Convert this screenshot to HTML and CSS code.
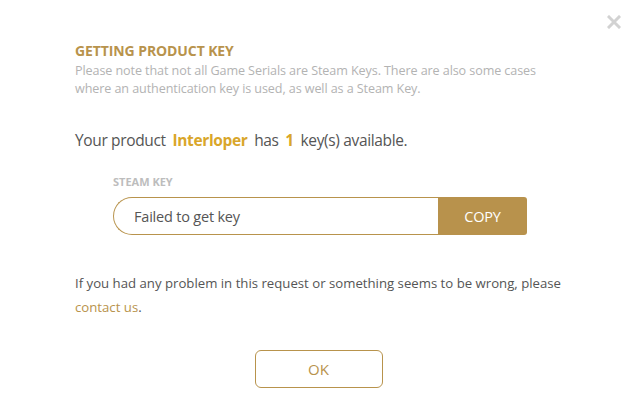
FILE: index.html
```html
<!DOCTYPE html>
<html>
<head>
<meta charset="utf-8">
<link rel="stylesheet" href="styles.css">
</head>
<body>
<div class="modal">
  <button class="close" aria-label="Close">
    <svg width="14" height="14" viewBox="0 0 14 14"><path d="M2 2L12 12M12 2L2 12" stroke="#d2d2d2" stroke-width="3" stroke-linecap="square"/></svg>
  </button>
  <h2 class="title">GETTING PRODUCT KEY</h2>
  <p class="note">Please note that not all Game Serials are Steam Keys. There are also some cases where an authentication key is used, as well as a Steam Key.</p>
  <p class="product">Your product <strong class="hl">Interloper</strong> has <strong class="hl">1</strong> key(s) available.</p>
  <div class="keybox">
    <div class="label">STEAM KEY</div>
    <div class="field">
      <div class="input">Failed to get key</div>
      <button class="copy">COPY</button>
    </div>
  </div>
  <p class="help">If you had any problem in this request or something seems to be wrong, please <a class="link" href="#">contact us</a>.</p>
  <div class="actions"><button class="ok">OK</button></div>
</div>
</body>
</html>
```

FILE: styles.css
```css
html, body { margin: 0; padding: 0; background: #fff; }
body { font-family: "Open Sans", "Noto Sans", sans-serif; }
.modal { position: relative; width: 637px; height: 417px; box-sizing: border-box; padding: 40px 75px 0 75px; }
.close { position: absolute; top: 15px; right: 16px; border: 0; background: none; padding: 0; width: 14px; height: 14px; cursor: pointer; }
.close svg { display: block; }
.title { margin: 0; font-size: 14px; font-weight: 700; color: #b8934c; line-height: 22px; letter-spacing: -0.1px; }
.note { margin: 0; font-size: 12.6px; color: #b3b3b3; line-height: 18px; width: 480px; letter-spacing: -0.1px; }
.product { margin: 31px 0 0 0; font-size: 15.5px; color: #555; line-height: 22px; letter-spacing: -0.35px; }
.hl { color: #d9a62a; font-weight: 700; margin: 0 3px; }
.keybox { margin: 24px 0 0 38px; width: 414px; }
.label { font-size: 11px; font-weight: 700; color: #bdbdbd; line-height: 14px; letter-spacing: 0; }
.field { display: flex; margin-top: 8px; height: 38px; }
.input { flex: 1; border: 1px solid #b8934c; border-right: 0; border-radius: 19px 0 0 19px; display: flex; align-items: center; padding-left: 20px; font-size: 14.5px; color: #555; letter-spacing: -0.2px; }
.copy { width: 89px; border: 0; background: #b8924c; color: #fff; font-family: inherit; font-size: 14.5px; border-radius: 0 3px 3px 0; letter-spacing: -0.2px; }
.help { margin: 36px 0 0 0; width: 500px; font-size: 13.2px; color: #555; line-height: 24px; letter-spacing: 0; }
.link { color: #b8934c; text-decoration: none; }
.actions { display: flex; justify-content: center; margin-top: 30px; }
.ok { width: 128px; height: 38px; border: 1px solid #b8934c; border-radius: 6px; background: #fff; color: #b8934c; font-family: inherit; font-size: 15px; margin-top: 1px; }
```
